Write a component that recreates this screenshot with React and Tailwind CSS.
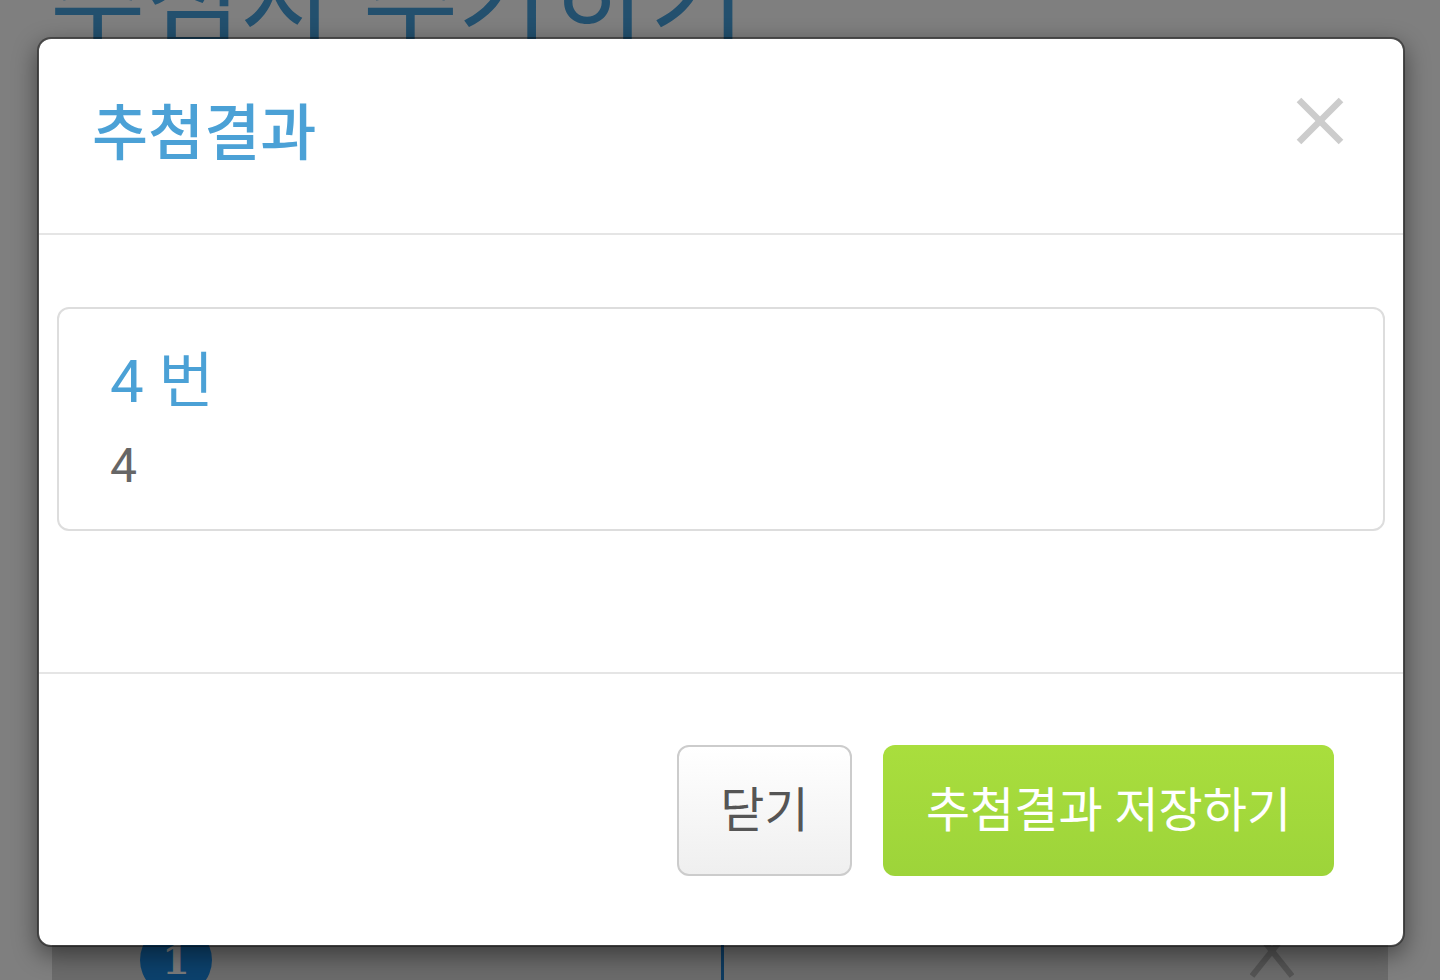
import React from "react";

const font = { fontFamily: "'Roboto','Noto Sans CJK KR',sans-serif" };

export default function App() {
  return (
    <div
      className="relative w-[1440px] h-[980px] overflow-hidden bg-white"
      style={font}
    >
      {/* background page */}
      <div className="flex flex-col h-full">
        <div className="pl-[50px] mt-[-50px] text-[104px] leading-[104px] text-[#46a0dc] whitespace-nowrap">
          추첨자 추가하기
        </div>
        <div className="flex-1" />
        <div className="mx-[52px] h-[60px] bg-[#d6d6d6] flex items-start">
          <div className="ml-[88px] mt-[4px] w-[72px] h-[72px] rounded-full bg-[#1882d8] flex items-center justify-center text-[#f2f2f2] text-[40px] font-bold" style={{ fontFamily: "'DejaVu Serif',serif" }}>
            1
          </div>
          <div className="ml-[509px] w-[3px] h-[60px] bg-[#1c76c0]" />
          <div className="ml-[526px]">
            <svg width="44" height="60" viewBox="0 0 44 60">
              <line x1="2" y1="6" x2="42" y2="56" stroke="#a8a8a8" strokeWidth="6" />
              <line x1="42" y1="6" x2="2" y2="56" stroke="#a8a8a8" strokeWidth="6" />
            </svg>
          </div>
        </div>
      </div>

      {/* overlay */}
      <div className="absolute inset-0 bg-black/50" />

      {/* modal */}
      <div className="absolute left-[37px] top-[37px] w-[1368px] h-[910px] bg-white bg-clip-padding border-2 border-black/40 rounded-[14px] shadow-[0_8px_24px_rgba(0,0,0,0.45)] flex flex-col">
        {/* header */}
        <div className="h-[196px] border-b-2 border-[#e5e5e5] flex justify-between pl-[53px] pr-[59px]">
          <div className="self-center text-[61px] leading-[70px] font-medium text-[#4ba1d6] mt-[-4px]">
            추첨결과
          </div>
          <div className="mt-[58px]">
            <svg width="48" height="48" viewBox="0 0 48 48">
              <line x1="3" y1="3" x2="45" y2="45" stroke="#cccccc" strokeWidth="6.5" />
              <line x1="45" y1="3" x2="3" y2="45" stroke="#cccccc" strokeWidth="6.5" />
            </svg>
          </div>
        </div>

        {/* body */}
        <div className="h-[437px] pt-[72px] px-[18px]">
          <div className="h-[224px] border-2 border-[#dddddd] rounded-[12px] pl-[51px] pt-[37px]">
            <div className="text-[60px] leading-[72px] text-[#4ba1d6]">4 번</div>
            <div className="mt-[20px] text-[48px] leading-[56px] text-[#666666]">4</div>
          </div>
        </div>

        {/* footer */}
        <div className="flex-1 border-t-2 border-[#e5e5e5] flex justify-end items-start gap-[31px] pt-[71px] pr-[69px]">
          <button className="w-[175px] h-[131px] border-2 border-[#cccccc] rounded-[12px] bg-gradient-to-b from-white to-[#efefef] text-[#555555] text-[48px]">
            닫기
          </button>
          <button className="w-[451px] h-[131px] rounded-[12px] bg-gradient-to-b from-[#a9de3d] to-[#9dd43a] text-white text-[48px]">
            추첨결과 저장하기
          </button>
        </div>
      </div>
    </div>
  );
}
